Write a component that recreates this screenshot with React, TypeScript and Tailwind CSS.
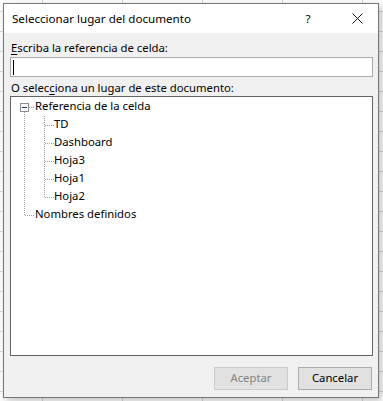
import React from "react";

const font = "font-['Noto_Sans',sans-serif]";

function TreeLines() {
  const h = (y: number, x1: number, x2: number) => (
    <line x1={x1} y1={y + 0.5} x2={x2} y2={y + 0.5} stroke="#a0a0a0" strokeWidth={1} strokeDasharray="1 1" />
  );
  const v = (x: number, y1: number, y2: number) => (
    <line x1={x + 0.5} y1={y1} x2={x + 0.5} y2={y2} stroke="#a0a0a0" strokeWidth={1} strokeDasharray="1 1" />
  );
  return (
    <svg className="absolute left-0 top-0" width={60} height={130} shapeRendering="crispEdges">
      <rect x={9.5} y={6.5} width={8} height={8} fill="#fff" stroke="#8f8f8f" />
      <line x1={11} y1={10.5} x2={16} y2={10.5} stroke="#1e3a6e" />
      {h(10, 18, 24)}
      {v(13, 15, 118)}
      {h(118, 14, 24)}
      {v(33, 19, 100)}
      {h(28, 34, 43)}
      {h(46, 34, 43)}
      {h(64, 34, 43)}
      {h(82, 34, 43)}
      {h(100, 34, 43)}
    </svg>
  );
}

export default function App() {
  const children = ["TD", "Dashboard", "Hoja3", "Hoja1", "Hoja2"];
  return (
    <div
      className={`w-[383px] h-[401px] overflow-hidden bg-white bg-[linear-gradient(to_right,#d6d6d6_1px,transparent_1px),linear-gradient(to_bottom,#d6d6d6_1px,transparent_1px)] bg-[size:80px_20px] bg-[position:42px_11px] pt-[3px] pl-[3px] ${font} text-[11.3px] text-black`}
    >
      <div className="w-[376px] h-[395px] border border-[#767676] bg-[#f0f0f0] flex flex-col shadow-[3px_3px_8px_rgba(0,0,0,0.25)]">
        <div className="h-[29px] bg-white flex items-center pl-[8px] shrink-0 text-[11.6px]">
          <span className="leading-[16px] pt-[1px]">Seleccionar lugar del documento</span>
          <span className="ml-auto w-[12px] text-center leading-[16px] pt-[1px]">?</span>
          <span className="ml-[38px] mr-[15px] flex items-center">
            <svg width="11" height="11" viewBox="0 0 11 11">
              <path d="M0.5 0.5 L10.5 10.5 M10.5 0.5 L0.5 10.5" stroke="#111" strokeWidth="1" fill="none" />
            </svg>
          </span>
        </div>
        <div className="flex flex-col pl-[6px] pr-[5px] pt-[7px]">
          <div className="leading-[16px] pl-[1px]">
            <span className="underline underline-offset-[2px]">E</span>scriba la referencia de celda:
          </div>
          <div className="mt-[1px] h-[20px] bg-white border border-[#a9a9a9] flex items-center pl-[2px]">
            <div className="w-[1px] h-[15px] bg-black" />
          </div>
          <div className="mt-[3px] leading-[16px] pl-[1px]">
            O selec<span className="underline underline-offset-[2px]">c</span>iona un lugar de este documento:
          </div>
          <div className="relative h-[260px] bg-white border border-[#646464]">
            <TreeLines />
            <div className="flex flex-col">
              <div className="h-[18px] flex items-center pl-[24px]">Referencia de la celda</div>
              {children.map((c) => (
                <div key={c} className="h-[18px] flex items-center pl-[43px]">
                  {c}
                </div>
              ))}
              <div className="h-[18px] flex items-center pl-[24px]">Nombres definidos</div>
            </div>
          </div>
          <div className="mt-[11px] flex justify-end gap-[10px] pr-[1px]">
            <div className="w-[74px] h-[23px] border border-[#cccccc] bg-[#e1e1e1] text-[#838383] flex items-center justify-center">
              Aceptar
            </div>
            <div className="w-[74px] h-[23px] border border-[#adadad] bg-[#e1e1e1] flex items-center justify-center">
              Cancelar
            </div>
          </div>
        </div>
      </div>
    </div>
  );
}
